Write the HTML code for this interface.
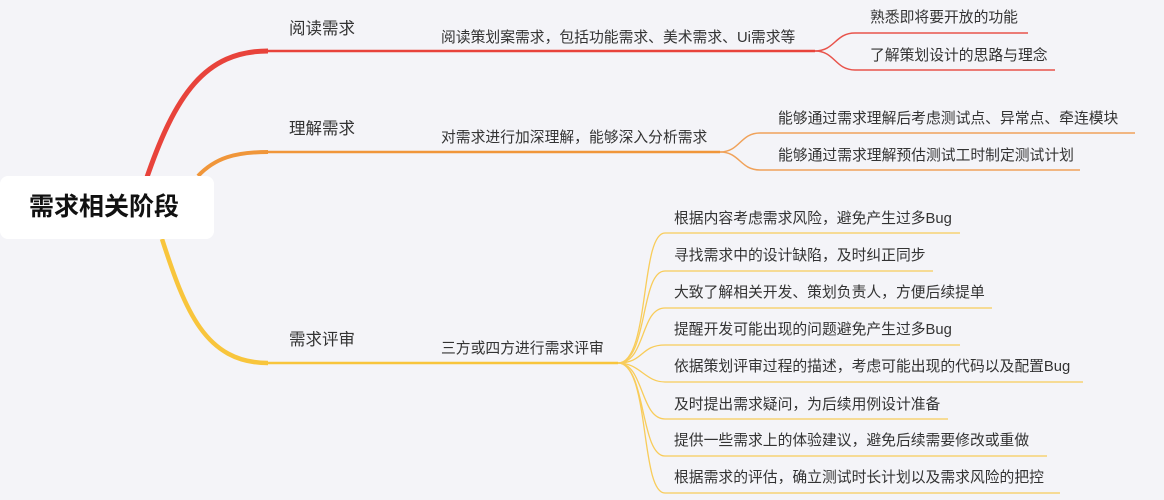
<!DOCTYPE html>
<html><head><meta charset="utf-8"><style>
body{margin:0;width:1164px;height:500px;background:#f4f4f8;overflow:hidden;position:relative;font-family:"Liberation Sans","Noto Sans CJK SC",sans-serif;color:#333}
svg{position:absolute;left:0;top:0}
.t{position:absolute;font-size:14.8px;line-height:18px;white-space:nowrap;color:#333}
.m{font-size:16.5px}
.root{position:absolute;left:0;top:176px;width:214px;height:63px;background:#fff;border-radius:8px;font-size:25px;font-weight:bold;color:#111;line-height:63px;padding-left:29px;box-sizing:border-box}
</style></head><body>
<svg width="1164" height="500">
<g fill="none">
<path d="M146 180 C175 95 205 51 268 51" stroke="#e8433b" stroke-width="5"/>
<path d="M266 51 L815 51" stroke="#e8433b" stroke-width="2.5"/>
<path d="M198 176 C215 158 235 152 268 152" stroke="#f0963a" stroke-width="4"/>
<path d="M266 152 L720 152" stroke="#f0963a" stroke-width="2.5"/>
<path d="M162 239 C185 310 205 363 268 363" stroke="#f8c53c" stroke-width="4.5"/>
<path d="M266 363 L618 363" stroke="#f8c53c" stroke-width="2.5"/>
<g stroke="#e8534b" stroke-width="1.5">
<path d="M815 51 C835 51 835 33 855 33 L1028 33"/>
<path d="M815 51 C835 51 835 70 855 70 L1055 70"/>
</g>
<g stroke="#f0a25a" stroke-width="1.5">
<path d="M720 152 C740 152 740 133 760 133 L1135 133"/>
<path d="M720 152 C740 152 740 170 760 170 L1080 170"/>
</g>
<g stroke="#f8cc5a" stroke-width="1.3">
<path d="M618 363 C650 363 640 233 665 233 L960 233"/>
<path d="M618 363 C648 363 640 271 665 271 L933 271"/>
<path d="M618 363 C646 363 640 308 665 308 L992 308"/>
<path d="M618 363 C644 363 640 345 665 345 L960 345"/>
<path d="M618 363 C640 363 645 382 665 382 L1083 382"/>
<path d="M618 363 C644 363 640 419 665 419 L948 419"/>
<path d="M618 363 C646 363 640 456 665 456 L1047 456"/>
<path d="M618 363 C650 363 640 493 665 493 L1060 493"/>
</g>
</g>
</svg>
<div class="root">需求相关阶段</div>
<div class="t m" style="left:289px;top:20px">阅读需求</div>
<div class="t m" style="left:289px;top:120px">理解需求</div>
<div class="t m" style="left:289px;top:331px">需求评审</div>
<div class="t" style="left:441px;top:29px">阅读策划案需求，包括功能需求、美术需求、Ui需求等</div>
<div class="t" style="left:441px;top:129px">对需求进行加深理解，能够深入分析需求</div>
<div class="t" style="left:441px;top:340px">三方或四方进行需求评审</div>
<div class="t" style="left:870px;top:9px">熟悉即将要开放的功能</div>
<div class="t" style="left:870px;top:47px">了解策划设计的思路与理念</div>
<div class="t" style="left:778px;top:110px">能够通过需求理解后考虑测试点、异常点、牵连模块</div>
<div class="t" style="left:778px;top:147px">能够通过需求理解预估测试工时制定测试计划</div>
<div class="t" style="left:674px;top:210px">根据内容考虑需求风险，避免产生过多Bug</div>
<div class="t" style="left:674px;top:247px">寻找需求中的设计缺陷，及时纠正同步</div>
<div class="t" style="left:674px;top:284px">大致了解相关开发、策划负责人，方便后续提单</div>
<div class="t" style="left:674px;top:321px">提醒开发可能出现的问题避免产生过多Bug</div>
<div class="t" style="left:674px;top:358px">依据策划评审过程的描述，考虑可能出现的代码以及配置Bug</div>
<div class="t" style="left:674px;top:396px">及时提出需求疑问，为后续用例设计准备</div>
<div class="t" style="left:674px;top:432px">提供一些需求上的体验建议，避免后续需要修改或重做</div>
<div class="t" style="left:674px;top:469px">根据需求的评估，确立测试时长计划以及需求风险的把控</div>
</body></html>
